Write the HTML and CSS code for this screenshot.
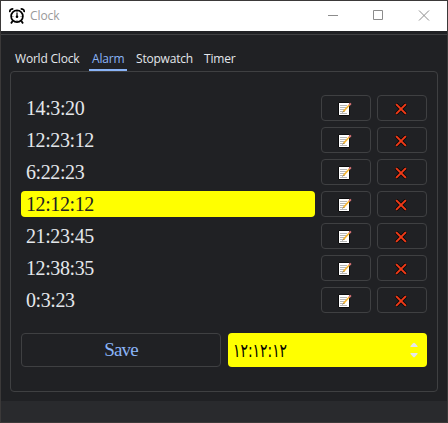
FILE: index.html
```html
<!DOCTYPE html>
<html lang="en">
<head>
<meta charset="utf-8">
<title>Clock</title>
<link rel="stylesheet" href="styles.css">
</head>
<body>
<svg class="defs" width="0" height="0">
  <symbol id="edit" viewBox="0 0 14 14">
    <path d="M.5 .5H11.5V13.5H.5Z" fill="#fff" stroke="#0c0c0d"/>
    <path d="M2 3.5H9M2 5.5H9M2 7.5H8M2 9.5H7M2 11.5H9" stroke="#a3a3a3" stroke-width=".8" fill="none"/>
    <path d="M5.2 9.8L11.3 3" stroke="#f7b733" stroke-width="1.7"/>
    <path d="M11.2 3.2L12.8 1.4" stroke="#e0787c" stroke-width="2"/>
    <path d="M4.6 10.4L5.4 9.6" stroke="#555" stroke-width="1"/>
  </symbol>
  <symbol id="cross" viewBox="0 0 12 12">
    <path d="M.9 .9L11.1 11.1M11.1 .9L.9 11.1" stroke="#0a0a0b" stroke-width="3.6"/>
    <path d="M1.1 1.1L10.9 10.9M10.9 1.1L1.1 10.9" stroke="#f03a17" stroke-width="2"/>
  </symbol>
</svg>
<div class="window">
  <header class="titlebar">
    <svg class="logo" width="16" height="16" viewBox="0 0 16 16" fill="none" stroke="#000">
      <circle cx="8" cy="8.3" r="5.9" stroke-width="1.7"/>
      <path d="M.8 4.2C.6 2 2 .8 4.3 .9M15.2 4.2C15.4 2 14 .8 11.7 .9" stroke-width="1.7"/>
      <path d="M3.6 13L2 15.5M12.4 13L14 15.5" stroke-width="1.8"/>
      <path d="M8 4.4V8.5" stroke-width="1.2"/>
      <circle cx="8" cy="8.8" r="1.3" fill="#000" stroke="none"/>
      <path d="M8 3.2V4M8 12.3V13M3.5 8.5H4.3M11.7 8.5H12.5" stroke-width=".8"/>
    </svg>
    <span class="caption">Clock</span>
    <svg class="controls" width="102" height="12" viewBox="0 0 102 12" fill="none" stroke="#8c8c8c">
      <path d="M0 5.5H10"/>
      <path d="M45.5 .5H54.5V9.5H45.5Z"/>
      <path d="M91 .5L101 10.5M101 .5L91 10.5"/>
    </svg>
  </header>
  <main class="body">
    <nav class="tabs">
      <span class="tab world">World Clock</span>
      <span class="tab active">Alarm</span>
      <span class="tab stopwatch">Stopwatch</span>
      <span class="tab timer">Timer</span>
    </nav>
    <section class="panel">
      <div class="row"><span class="time">14:3:20</span><button class="btn"><svg class="edit"><use href="#edit"/></svg></button><button class="btn"><svg class="cross"><use href="#cross"/></svg></button></div>
      <div class="row"><span class="time">12:23:12</span><button class="btn"><svg class="edit"><use href="#edit"/></svg></button><button class="btn"><svg class="cross"><use href="#cross"/></svg></button></div>
      <div class="row"><span class="time">6:22:23</span><button class="btn"><svg class="edit"><use href="#edit"/></svg></button><button class="btn"><svg class="cross"><use href="#cross"/></svg></button></div>
      <div class="row"><span class="time selected">12:12:12</span><button class="btn"><svg class="edit"><use href="#edit"/></svg></button><button class="btn"><svg class="cross"><use href="#cross"/></svg></button></div>
      <div class="row"><span class="time">21:23:45</span><button class="btn"><svg class="edit"><use href="#edit"/></svg></button><button class="btn"><svg class="cross"><use href="#cross"/></svg></button></div>
      <div class="row"><span class="time">12:38:35</span><button class="btn"><svg class="edit"><use href="#edit"/></svg></button><button class="btn"><svg class="cross"><use href="#cross"/></svg></button></div>
      <div class="row"><span class="time">0:3:23</span><button class="btn"><svg class="edit"><use href="#edit"/></svg></button><button class="btn"><svg class="cross"><use href="#cross"/></svg></button></div>
      <div class="editor">
        <button class="save">Save</button>
        <div class="spin">
          <bdo dir="ltr" class="value">١٢:١٢:١٢</bdo>
          <svg width="8" height="16" viewBox="0 0 8 16" fill="#e4e7eb"><path d="M.5 5V4L3 1.2Q4 .2 5 1.2L7.5 4V5ZM.5 11V12L3 14.8Q4 15.8 5 14.8L7.5 12V11Z"/></svg>
        </div>
      </div>
    </section>
  </main>
  <footer class="status"></footer>
</div>
</body>
</html>
```
FILE: styles.css
```css
* { box-sizing: border-box; }
body {
  margin: 0;
  width: 448px;
  height: 423px;
  overflow: hidden;
  background: #3b3939;
  font-family: "Open Sans", "Noto Sans", sans-serif;
}
.defs { display: block; }
.window {
  display: flex;
  flex-direction: column;
  width: 446px;
  height: 421px;
  margin: 1px;
  background: #202124;
}
.titlebar {
  display: flex;
  align-items: center;
  height: 30px;
  padding: 0 17px 0 8px;
  background: #fff;
}
.logo { margin-top: -1px; }
.caption {
  margin: -1px 0 0 5px;
  color: #999;
  font-size: 12px;
  letter-spacing: -0.1px;
}
.controls { margin-left: auto; }
.body {
  height: 367px;
  margin-top: 3px;
  padding: 14px 9px 0;
  border-top: 1px solid #3f4042;
}
.tabs {
  display: flex;
  height: 22px;
  color: #e4e7eb;
  font-size: 12px;
  line-height: 19px;
  white-space: nowrap;
}
.tab { height: 22px; letter-spacing: -0.2px; }
.world { width: 74px; padding-left: 5px; }
.active {
  width: 38px;
  margin-left: 5px;
  padding-left: 3px;
  border-bottom: 2px solid #8ab4f7;
  color: #8ab4f7;
}
.stopwatch { width: 68px; margin-left: 9px; }
.panel {
  width: 428px;
  height: 321px;
  padding: 23px 10px 0;
  border: 1px solid #3f4042;
  border-radius: 4px;
}
.row {
  display: flex;
  gap: 6px;
  height: 27px;
  margin-bottom: 5px;
}
.time {
  width: 294px;
  height: 26px;
  padding-left: 5px;
  border-radius: 4px;
  color: #e4e7eb;
  font: 20px/26px "Liberation Serif", serif;
  letter-spacing: -0.4px;
}
.selected { background: #ff0; color: #202124; }
.btn, .save {
  display: flex;
  align-items: center;
  justify-content: center;
  width: 50px;
  height: 26px;
  padding: 0;
  border: 1px solid #3f4042;
  border-radius: 4px;
  background: none;
}
.edit { width: 14px; height: 14px; margin-left: -2px; margin-top: 2px; }
.cross { width: 12px; height: 12px; margin-left: -2px; margin-top: 2px; }
.editor {
  display: flex;
  gap: 7px;
  margin-top: 19px;
}
.save {
  width: 200px;
  height: 34px;
  color: #8ab4f7;
  font: 19px "Liberation Serif", serif;
  letter-spacing: -0.8px;
}
.spin {
  display: flex;
  align-items: center;
  justify-content: space-between;
  width: 199px;
  height: 34px;
  padding: 0 9px 0 5px;
  border-radius: 4px;
  background: #ff0;
}
.value {
  color: #000;
  font: 19px "DejaVu Sans", sans-serif;
  letter-spacing: -1px;
  transform: scaleX(0.73);
  transform-origin: left;
}
.status { flex: 1; background: #292a2d; }
```
